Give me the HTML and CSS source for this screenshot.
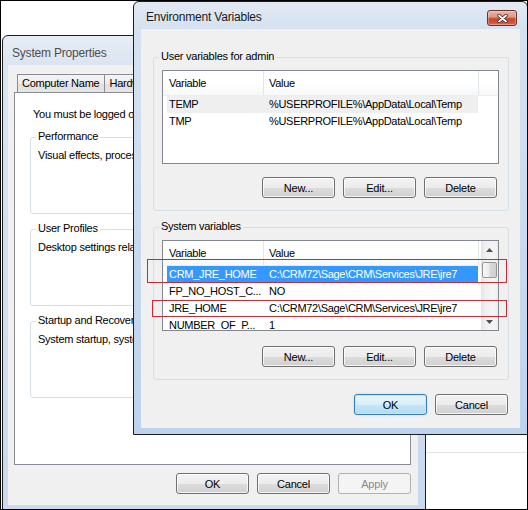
FILE: index.html
```html
<!DOCTYPE html>
<html>
<head>
<meta charset="utf-8">
<title>Environment Variables</title>
<link rel="stylesheet" href="styles.css">
</head>
<body>
<div class="screen">
  <div class="desk-line"></div>

  <div class="window sysprops">
    <div class="titlebar"><span class="title">System Properties</span></div>
    <div class="client">
      <div class="tabstrip">
        <div class="tab">Computer Name</div>
        <div class="tab">Hardware</div>
      </div>
      <div class="tabpane">
        <p class="note">You must be logged on as an Administrator to make most of these changes.</p>
        <fieldset class="group sp-group">
          <legend>Performance</legend>
          <p>Visual effects, processor scheduling, memory usage, and virtual memory</p>
        </fieldset>
        <fieldset class="group sp-group">
          <legend>User Profiles</legend>
          <p>Desktop settings related to your logon</p>
        </fieldset>
        <fieldset class="group sp-group">
          <legend>Startup and Recovery</legend>
          <p>System startup, system failure, and debugging information</p>
        </fieldset>
      </div>
      <div class="dlg-buttons">
        <button class="btn">OK</button>
        <button class="btn">Cancel</button>
        <button class="btn" disabled>Apply</button>
      </div>
    </div>
  </div>

  <div class="window envvars">
    <div class="titlebar">
      <span class="title">Environment Variables</span>
      <span class="close">
        <svg width="11" height="9" viewBox="0 0 11 9">
          <path d="M2 1.5 L9 7.5 M9 1.5 L2 7.5" stroke="#3b2622" stroke-width="3.4" stroke-linecap="round" fill="none"/>
          <path d="M2 1.5 L9 7.5 M9 1.5 L2 7.5" stroke="#ffffff" stroke-width="1.8" stroke-linecap="round" fill="none"/>
        </svg>
      </span>
    </div>
    <div class="client">
      <fieldset class="group ev-group first">
        <legend>User variables for admin</legend>
        <div class="list user-list">
          <div class="list-main">
            <div class="lheader"><div class="hcell c1">Variable</div><div class="hcell c2">Value</div></div>
            <div class="lrow inactive"><span class="cell c1">TEMP</span><span class="cell c2">%USERPROFILE%\AppData\Local\Temp</span></div>
            <div class="lrow"><span class="cell c1">TMP</span><span class="cell c2">%USERPROFILE%\AppData\Local\Temp</span></div>
          </div>
        </div>
        <div class="btn-row b1">
          <button class="btn">New...</button>
          <button class="btn">Edit...</button>
          <button class="btn">Delete</button>
        </div>
      </fieldset>

      <fieldset class="group ev-group">
        <legend>System variables</legend>
        <div class="list sys-list">
          <div class="list-main">
            <div class="lheader"><div class="hcell c1">Variable</div><div class="hcell c2">Value</div></div>
            <div class="lrow sel"><span class="cell c1">CRM_JRE_HOME</span><span class="cell c2">C:\CRM72\Sage\CRM\Services\JRE\jre7</span></div>
            <div class="lrow"><span class="cell c1">FP_NO_HOST_C...</span><span class="cell c2">NO</span></div>
            <div class="lrow"><span class="cell c1">JRE_HOME</span><span class="cell c2">C:\CRM72\Sage\CRM\Services\JRE\jre7</span></div>
            <div class="lrow"><span class="cell c1">NUMBER_OF_P...</span><span class="cell c2">1</span></div>
          </div>
          <div class="vscroll">
            <div class="sb-btn"><svg width="7" height="4" viewBox="0 0 7 4"><path d="M0 4 L3.5 0 L7 4 Z" fill="#505050"/></svg></div>
            <div class="sb-thumb"></div>
            <div class="sb-space"></div>
            <div class="sb-btn"><svg width="7" height="4" viewBox="0 0 7 4"><path d="M0 0 L7 0 L3.5 4 Z" fill="#505050"/></svg></div>
          </div>
        </div>
        <div class="btn-row b2">
          <button class="btn">New...</button>
          <button class="btn">Edit...</button>
          <button class="btn">Delete</button>
        </div>
      </fieldset>

      <div class="dlg-buttons">
        <button class="btn default">OK</button>
        <button class="btn">Cancel</button>
      </div>
    </div>
  </div>

  <div class="mark mark1"></div>
  <div class="mark mark2"></div>
</div>
</body>
</html>
```

FILE: styles.css
```css
* { box-sizing: border-box; }

html, body {
  margin: 0;
  padding: 0;
}

body {
  background: #ffffff;
  font-family: "Liberation Sans", Arial, sans-serif;
  font-size: 11px;
  color: #000000;
}

.screen {
  position: relative;
  width: 528px;
  height: 510px;
  border: 1px solid #000000;
  overflow: hidden;
  background: #ffffff;
}

.desk-line {
  position: absolute;
  left: 425px;
  top: 451px;
  width: 102px;
  height: 1px;
  background: #e4e4e4;
}

/* ---------- windows ---------- */
.window {
  position: absolute;
  display: flex;
  flex-direction: column;
  border: 1px solid #1c1c1c;
  border-radius: 6px 6px 0 0;
  background: linear-gradient(180deg, #e7edf5 0, #dae4f1 30px, #c9d9ee 100%);
}

.sysprops {
  left: 1px;
  top: 34px;
  width: 424px;
  height: 475px;
  padding: 0 7px 4px 5px;
}

.envvars {
  left: 132px;
  top: 0;
  width: 395px;
  height: 434px;
  padding: 0 7px 6px 7px;
  background: linear-gradient(180deg, #e2e9f3 0, #d5e1f0 28px, #bdd3ed 100%);
}

.titlebar {
  display: flex;
  align-items: flex-start;
  flex: none;
}

.sysprops .titlebar {
  height: 29px;
  padding: 10px 0 0 4px;
}

.envvars .titlebar {
  height: 27px;
  padding: 8px 3px 0 5px;
}

.title {
  font-size: 12px;
  line-height: 15px;
  letter-spacing: -0.2px;
  white-space: nowrap;
  color: #1a1a1a;
}

.sysprops .title {
  color: #4e4e4e;
}

.close {
  margin-left: auto;
  width: 30px;
  height: 16px;
  border: 1px solid #643530;
  border-radius: 3px;
  background: linear-gradient(180deg, #ebb2a5 0%, #df9886 42%, #c8472d 56%, #cf553a 85%, #dd7456 100%);
  box-shadow: inset 0 0 0 1px rgba(255, 255, 255, 0.3);
  display: flex;
  align-items: center;
  justify-content: center;
}

.close svg { display: block; }

.client {
  flex: none;
  background: #f0f0f0;
  display: flex;
  flex-direction: column;
}

.sysprops .client { height: 440px; }
.envvars .client { height: 399px; }

/* ---------- tabs ---------- */
.tabstrip {
  display: flex;
  align-items: flex-end;
  height: 18px;
  margin-top: 9px;
  padding-left: 9px;
  flex: none;
}

.tab {
  height: 18px;
  border: 1px solid #898c95;
  border-bottom: 0;
  padding: 0 5px 0 4px;
  margin-right: -1px;
  line-height: 16px;
  white-space: nowrap;
  letter-spacing: -0.25px;
  background: linear-gradient(180deg, #f4f4f4 0%, #ececec 50%, #dfdfdf 51%, #e6e6e6 100%);
}

.tabpane {
  flex: none;
  height: 373px;
  margin: 0 7px 0 6px;
  border: 1px solid #898c95;
  background: #ffffff;
  display: flex;
  flex-direction: column;
  padding-top: 14px;
}

.note {
  margin: 0 0 0 18px;
  line-height: 15px;
  white-space: nowrap;
  letter-spacing: -0.25px;
}

/* ---------- group boxes ---------- */
.group {
  margin: 0;
  min-width: 0;
  border: 1px solid #d5dfe5;
  border-radius: 3px;
}

.group legend {
  padding: 0 2px 2px;
  line-height: 15px;
  letter-spacing: -0.25px;
  white-space: nowrap;
}

.sp-group {
  margin: 7px 15px 0;
  padding: 2px 6px 50px 7px;
}

.sp-group legend { margin-left: -2px; }

.sp-group p {
  margin: 0;
  line-height: 15px;
  white-space: nowrap;
  overflow: hidden;
  letter-spacing: -0.25px;
}

.ev-group {
  margin: 8px 11px 0 12px;
  padding: 4px 9px 12px 8px;
}

.ev-group.first { margin-top: 20px; }

.ev-group legend { margin-left: -3px; }

/* ---------- list views ---------- */
.list {
  display: grid;
  grid-template-columns: minmax(0, 1fr) auto;
  border: 1px solid #828790;
  background: #ffffff;
  overflow: hidden;
}

.user-list { height: 94px; }
.sys-list { height: 91px; }

.list-main {
  min-width: 0;
  overflow: hidden;
}

.lheader {
  display: flex;
  height: 25px;
  background: linear-gradient(180deg, #ffffff 0%, #ffffff 50%, #f7f8fa 100%);
  border-bottom: 1px solid #eceef1;
}

.hcell {
  line-height: 24px;
  white-space: nowrap;
  border-right: 1px solid #e3e6ea;
  letter-spacing: -0.3px;
}

.hcell.c1 { width: 101px; padding-left: 6px; }
.hcell.c2 { width: 215px; padding-left: 5px; }

.lrow {
  display: flex;
  width: 311px;
  height: 17px;
  margin-left: 4px;
  line-height: 17px;
  white-space: nowrap;
  letter-spacing: -0.3px;
}

.cell { display: block; overflow: hidden; }
.cell.c1 { width: 96px; padding-left: 2px; }
.cell.c2 { width: 215px; padding-left: 6px; }

.lrow.inactive { background: #efefef; }
.lrow.sel { background: #3399ff; color: #ffffff; }

.vscroll {
  width: 17px;
  display: flex;
  flex-direction: column;
  background: linear-gradient(90deg, #e4e4e4 0%, #efefef 25%, #f5f5f5 75%, #ececec 100%);
}

.sb-btn {
  height: 17px;
  display: flex;
  align-items: center;
  justify-content: center;
  flex: none;
}

.sb-btn svg { display: block; }

.sb-thumb {
  flex: none;
  height: 16px;
  margin: 4px 1px 0;
  border: 1px solid #989898;
  border-radius: 2px;
  background: linear-gradient(90deg, #f7f7f7 0%, #ebebeb 45%, #d9d9d9 55%, #d0d0d0 100%);
}

.sb-space { flex: 1; }

/* ---------- buttons ---------- */
.btn-row,
.dlg-buttons {
  display: flex;
  justify-content: flex-end;
  gap: 8px;
  flex: none;
}

.btn-row.b1 { margin: 13px 2px 0 0; }
.btn-row.b2 { margin: 15px 2px 0 0; }

.envvars .dlg-buttons { margin: 14px 12px 0 0; }
.sysprops .dlg-buttons { margin: 8px 7px 0 0; }

.btn {
  width: 73px;
  height: 21px;
  padding: 0;
  font-family: "Liberation Sans", Arial, sans-serif;
  font-size: 11px;
  letter-spacing: -0.2px;
  color: #000000;
  border: 1px solid #707070;
  border-radius: 3px;
  background: linear-gradient(180deg, #f3f3f3 0%, #ececec 50%, #dddddd 51%, #d0d0d0 100%);
  box-shadow: inset 0 0 0 1px rgba(255, 255, 255, 0.75);
}

.btn.default {
  border-color: #3c7fb1;
  background: linear-gradient(180deg, #e7f4fc 0%, #d9effb 50%, #c3e6f8 51%, #b3ddf3 100%);
  box-shadow: inset 0 0 0 1px #bfe6fb, 0 0 2px #9fd6f3;
}

.btn:disabled {
  color: #8a8a8a;
  border-color: #adb2b5;
  background: #f4f4f4;
  box-shadow: none;
}

/* ---------- annotation marks ---------- */
.mark {
  position: absolute;
  border: 1px solid #cc2b36;
}

.mark1 {
  left: 146px;
  top: 258px;
  width: 360px;
  height: 24px;
}

.mark2 {
  left: 151px;
  top: 299px;
  width: 355px;
  height: 17px;
}
```
